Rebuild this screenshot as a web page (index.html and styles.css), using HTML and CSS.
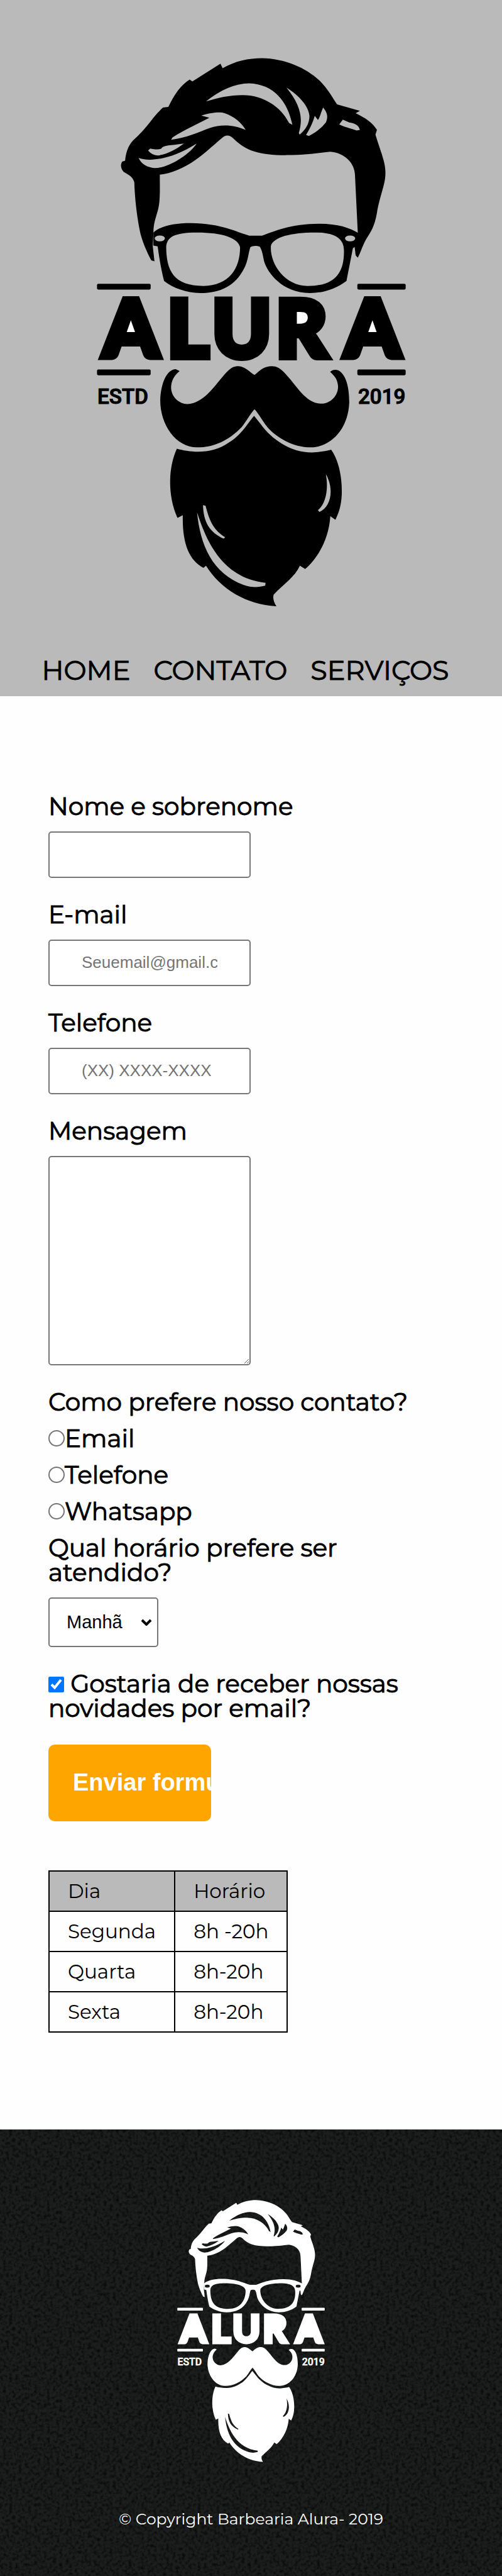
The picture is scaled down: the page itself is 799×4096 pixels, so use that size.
FILE: index.html
```html
<!DOCTYPE html>
<html lang="pt-br">
<head>
<meta charset="utf-8">
<meta name="viewport" content="width=device-width">
<title>Contato - Barbearia Alura</title>
<link rel="stylesheet" href="styles.css">
</head>
<body>
<header class="header">
  <svg class="logo logo-dark" viewBox="276 166 889 1577" role="img" aria-label="Logo da Barbearia Alura">
    <defs>
      <g id="logo-art">
        <g transform="translate(240 140) scale(.6122 .5357)" fill-rule="evenodd">
          <path d="M395 312C425 240 455 195 495 165L508 175L640 80L650 104C710 65 770 50 835 50C940 52 1040 100 1105 170C1145 215 1165 260 1188 298L1295 333L1275 345C1320 370 1355 395 1375 435L1368 460C1385 530 1415 600 1415 665C1415 730 1390 780 1375 880C1365 950 1345 985 1325 1020C1305 1060 1300 1090 1285 1120L1275 1108L1270 1060L1285 985L1272 680C1270 600 1210 555 1155 552C1080 562 1030 570 960 570C830 572 760 550 700 480C680 460 665 460 645 480C600 525 565 560 530 590C470 640 410 668 355 675C355 760 358 820 345 870C335 910 325 940 325 985L322 1060L330 1140L315 1135C295 1090 270 1030 260 970C245 880 238 800 235 715C225 680 205 675 185 660C170 640 170 620 178 605L192 600C195 560 205 520 230 490C300 420 320 365 370 315Z
            M572 282C640 220 710 185 775 185C890 190 955 280 978 408L962 398C925 310 840 248 745 248C680 248 630 262 572 282Z
            M950 208C1010 250 1055 310 1058 360C1058 400 1040 435 1012 460L1008 452C1030 370 1015 300 950 208Z
            M1122 315C1145 345 1145 370 1135 395C1110 430 1085 450 1055 468L1042 462C1065 420 1075 390 1083 360L1098 382C1110 360 1112 340 1122 315Z
            M1215 380L1245 395C1270 398 1290 410 1295 435L1280 438C1250 425 1220 420 1198 405Z
            M550 358C600 340 640 338 660 345C700 360 740 395 758 435C700 405 640 405 590 425C530 450 480 478 408 488L415 475C470 435 530 405 588 370Z
            M300 545L310 535C330 540 350 542 362 535C375 515 400 520 468 508C430 540 390 565 348 572C325 570 310 560 300 545Z
            M255 585C300 605 400 600 528 508C500 560 400 640 330 640C295 635 270 620 255 585Z"/>
          <path d="M325 985C360 950 420 935 500 935C640 935 720 985 775 1002H835C890 980 970 938 1105 938C1190 938 1250 960 1290 990L1280 1055L1262 1070C1250 1140 1240 1200 1232 1245C1180 1290 1120 1310 1060 1310C930 1310 860 1200 845 1140C838 1100 835 1080 825 1062C815 1055 790 1055 780 1065C770 1100 770 1140 750 1180C710 1270 640 1310 545 1310C480 1308 420 1285 375 1245C362 1190 352 1120 345 1060L325 1055Z
            M385 1060C390 1010 420 985 530 985C650 985 725 1015 732 1065C732 1180 680 1270 560 1272C420 1272 385 1190 385 1060Z
            M877 1055C890 1010 970 985 1085 985C1180 985 1220 1020 1220 1080C1222 1200 1180 1272 1050 1272C940 1272 870 1150 877 1055Z
            M331 1017a24 16 0 1 0 48 0a24 16 0 1 0-48 0Z
            M1225 1017a24 16 0 1 0 48 0a24 16 0 1 0-48 0Z"/>
        </g>
        <g transform="translate(240 780) scale(.6122 .6378)" fill-rule="evenodd">
          <rect x="60" y="55" width="252" height="26" rx="6"/>
          <rect x="1283" y="55" width="227" height="26" rx="6"/>
          <rect x="60" y="441" width="252" height="26" rx="6"/>
          <rect x="1283" y="441" width="227" height="26" rx="6"/>
          <path d="M800 466C830 440 850 426 880 426C905 426 920 435 940 455C1000 515 1040 595 1115 595C1160 595 1195 555 1192 515C1190 485 1175 470 1155 452C1165 442 1180 440 1195 445C1230 465 1245 520 1245 590C1240 710 1160 790 1065 792C980 792 900 745 860 700C835 670 820 640 800 620C780 640 765 670 740 700C680 760 610 792 530 792C430 792 357 690 357 580C360 500 390 440 430 440L448 448C420 470 408 495 408 525C410 565 445 597 485 597C560 590 600 530 660 462C690 430 705 426 725 426C755 428 775 450 800 466Z"/>
          <path d="M798 650L830 688C880 755 970 815 1070 815C1100 813 1140 808 1160 802C1195 850 1210 920 1210 990C1210 1040 1200 1080 1180 1118L1156 1102C1150 1200 1100 1290 1038 1340L1013 1325C990 1375 940 1405 890 1455C885 1470 890 1490 903 1508C760 1500 640 1430 572 1325L560 1335C490 1300 460 1220 463 1098L438 1110C390 1010 395 880 435 798C500 815 600 825 680 770C740 735 770 680 798 650Z
            M558 1052L570 1055C590 1130 610 1165 662 1197L655 1203C590 1175 560 1130 558 1052Z
            M530 1085C570 1200 640 1380 852 1402L850 1415C820 1422 790 1425 750 1412C600 1360 545 1230 530 1085Z
            M1135 912C1175 980 1160 1060 1105 1083L1098 1075C1130 1050 1150 990 1135 912Z"/>
        </g>
        <path class="logo-counter" d="M374 905L398 968H350ZM846 888H890V932H846ZM1070 905L1094 968H1046Z"/>
        <text class="logo-name" x="294 479 608 791 989" y="1026">ALURA</text>
        <text class="logo-small" x="278" y="1160">ESTD</text>
        <text class="logo-small" x="1164" y="1160" text-anchor="end">2019</text>
      </g>
    </defs>
    <use href="#logo-art"/>
  </svg>
  <nav>
    <ul class="menu">
      <li><a href="#home">Home</a></li>
      <li><a href="#contato">Contato</a></li>
      <li><a href="#servicos">Serviços</a></li>
    </ul>
  </nav>
</header>

<main class="main">
  <form class="form">
    <label class="title" for="nome">Nome e sobrenome</label>
    <input class="field" type="text" id="nome">

    <label class="title" for="email">E-mail</label>
    <input class="field" type="email" id="email" placeholder="Seuemail@gmail.com">

    <label class="title" for="telefone">Telefone</label>
    <input class="field" type="tel" id="telefone" placeholder="(XX) XXXX-XXXX">

    <label class="title" for="mensagem">Mensagem</label>
    <textarea class="field message" id="mensagem"></textarea>

    <fieldset class="options">
      <legend>Como prefere nosso contato?</legend>
      <label class="option"><input type="radio" name="contato" value="email">Email</label>
      <label class="option"><input type="radio" name="contato" value="telefone">Telefone</label>
      <label class="option"><input type="radio" name="contato" value="whatsapp">Whatsapp</label>
    </fieldset>

    <label class="title" for="horario">Qual horário prefere ser atendido?</label>
    <div class="select">
      <select id="horario">
        <option>Manhã</option>
        <option>Tarde</option>
        <option>Noite</option>
      </select>
      <svg class="chevron" viewBox="0 0 18 11" aria-hidden="true"><path d="M2 2l7 7 7-7"/></svg>
    </div>

    <label class="news"><input type="checkbox" checked> Gostaria de receber nossas novidades por email?</label>

    <button class="send" type="submit">Enviar formulário</button>
  </form>

  <table class="hours">
    <thead>
      <tr><th>Dia</th><th>Horário</th></tr>
    </thead>
    <tbody>
      <tr><td>Segunda</td><td>8h -20h</td></tr>
      <tr><td>Quarta</td><td>8h-20h</td></tr>
      <tr><td>Sexta</td><td>8h-20h</td></tr>
    </tbody>
  </table>
</main>

<footer class="footer">
  <svg class="logo logo-light" viewBox="276 166 889 1577" role="img" aria-label="Logo da Barbearia Alura"><use href="#logo-art"/></svg>
  <p class="copyright">© Copyright Barbearia Alura- 2019</p>
</footer>
</body>
</html>
```

FILE: styles.css
```css
* {
  box-sizing: border-box;
}

body {
  margin: 0;
  background: #fefefe;
  color: #000;
  font-family: Montserrat, Inter, "Open Sans", sans-serif;
}

/* Header */
.header {
  display: flex;
  flex-direction: column;
  align-items: center;
  padding: 92px 24px 16px;
  background: #bababa;
}

.logo {
  display: block;
  height: auto;
  fill: currentColor;
}

.logo-dark {
  width: 492px;
  max-width: 100%;
  color: #000;
}

.logo-light {
  width: 235px;
  color: #fff;
}

.logo-counter {
  fill: #fff;
}

.logo-name {
  font: 900 228px Lato, sans-serif;
  stroke: currentColor;
  stroke-width: 18px;
}

.logo-small {
  font: 500 60px Roboto, sans-serif;
  stroke: currentColor;
  stroke-width: 2px;
}

.menu {
  display: flex;
  gap: 37px;
  margin: 76px 0 0;
  padding: 0 18px 0 0;
  list-style: none;
}

.menu a {
  color: inherit;
  font-size: 43px;
  line-height: 50px;
  -webkit-text-stroke: 1px currentColor;
  text-decoration: none;
  text-transform: uppercase;
}

/* Contact form */
.main {
  padding: 156px 77px 154px;
}

.form {
  max-width: 600px;
  font-size: 39px;
  line-height: 39px;
  -webkit-text-stroke: 1px currentColor;
}

.title {
  display: block;
  margin-bottom: 20px;
}

.field {
  display: block;
  width: 322px;
  height: 74px;
  margin: 0 0 39px;
  padding: 0 51px;
  border: 2px solid #767676;
  border-radius: 5px;
  background: #fff;
  font: 26px "Liberation Sans", Arial, sans-serif;
  -webkit-text-stroke: 0;
}

.field::placeholder {
  color: #757575;
}

.message {
  height: 333px;
  padding: 20px 51px;
}

.options {
  min-width: 0;
  margin: 0;
  padding: 0;
  border: 0;
}

.options legend {
  margin-bottom: 19px;
  padding: 0;
}

.option {
  display: flex;
  align-items: center;
  margin-bottom: 19px;
}

.option input {
  flex: none;
  width: 26px;
  height: 26px;
  margin: 0;
  appearance: none;
  border: 2px solid #767676;
  border-radius: 50%;
  background: #fff;
}

.option input:checked {
  background: radial-gradient(#0075ff 50%, #fff 55%);
}

.select {
  display: grid;
  width: 175px;
  align-items: center;
  margin-bottom: 39px;
}

.select select,
.chevron {
  grid-area: 1 / 1;
}

.select select {
  height: 79px;
  padding: 0 27px;
  appearance: none;
  border: 2px solid #767676;
  border-radius: 5px;
  background: #fff;
  color: #000;
  font: 29px "Liberation Sans", Arial, sans-serif;
  -webkit-text-stroke: 0;
}

.chevron {
  justify-self: end;
  width: 18px;
  height: 11px;
  margin-right: 10px;
  fill: none;
  stroke: #000;
  stroke-width: 4;
  pointer-events: none;
}

.news {
  display: block;
  margin-bottom: 38px;
}

.news input {
  width: 25px;
  height: 25px;
  margin: 0;
  accent-color: #0075ff;
}

.send {
  display: block;
  width: 259px;
  height: 122px;
  padding: 0 39px;
  overflow: hidden;
  border: 0;
  border-radius: 10px;
  background: #ffa500;
  color: #fff;
  font: bold 38px "Liberation Sans", Arial, sans-serif;
  -webkit-text-stroke: 0;
  text-align: left;
  white-space: nowrap;
}

/* Opening hours */
.hours {
  margin-top: 78px;
  border-collapse: collapse;
  font-size: 31px;
  line-height: 32px;
}

.hours th,
.hours td {
  padding: 15px 29px;
  border: 2px solid #000;
  font-weight: 400;
  text-align: left;
}

.hours th {
  background: #bababa;
}

/* Footer */
.footer {
  display: flex;
  flex-direction: column;
  align-items: center;
  padding: 112px 24px 74px;
  background: #1c1e1d url("data:image/svg+xml,%3Csvg xmlns='http://www.w3.org/2000/svg' width='300' height='300'%3E%3Cfilter id='n' x='0' y='0' width='100%25' height='100%25' color-interpolation-filters='sRGB'%3E%3CfeTurbulence type='fractalNoise' baseFrequency='.2' numOctaves='2' seed='4' stitchTiles='stitch'/%3E%3CfeColorMatrix values='0 0 0 0 .02 0 0 0 0 .03 0 0 0 0 .03 2 0 0 0 -.8'/%3E%3C/filter%3E%3Crect width='300' height='300' filter='url(%23n)'/%3E%3C/svg%3E");
}

.copyright {
  margin: 73px 0 0;
  color: #fff;
  font-size: 25px;
  line-height: 34px;
}
```
